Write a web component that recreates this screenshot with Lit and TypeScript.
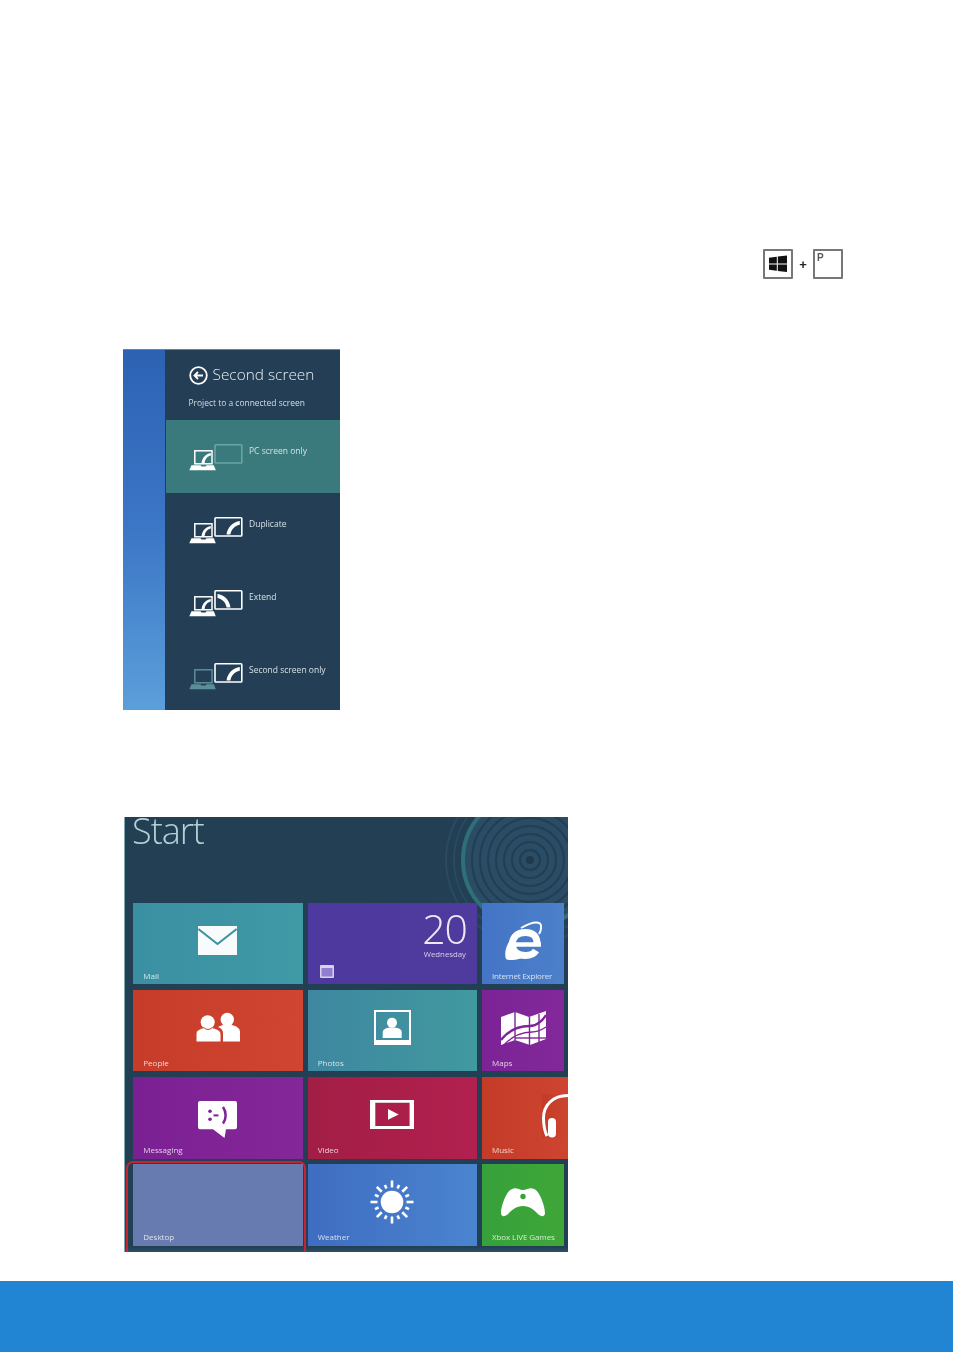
import { LitElement, html, css, svg } from "lit";
import { customElement } from "lit/decorators.js";

const laptop = (c: string, arc: boolean) => svg`
  <rect x="5.800" y="7.800" width="17.200" height="13" fill="none" stroke=${c} stroke-width="1.500"/>
  <path d="M2.500 22.200H11.500L12.500 23.400H16.500L17.500 22.200H24.800L26.800 27.200H0.300Z" fill=${c}/>
  ${arc ? svg`<path d="M12.500 20.500H15.500C16 16 18 13.500 21.800 12.500V10C16.500 11 13.200 14.500 12.500 20.500Z" fill=${c}/>` : null}`;

const monitor = (c: string) => svg`<rect x="26" y="1.800" width="26.800" height="18.200" rx="0.800" fill="none" stroke=${c} stroke-width="1.600"/>`;
const arcUp = svg`<path d="M37.500 18.600H41.400C42.200 13.500 45.500 10 50.800 8.800V5C44 6 38.500 11 37.500 18.600Z" fill="#fff"/>`;
const arcDown = svg`<path d="M28.500 5V9C33.500 10 36.800 13.500 37.600 18.600H41.500C40.500 11 35.500 6 28.500 5Z" fill="#fff"/>`;

const rows = [
  { label: "PC screen only", selected: true, laptopColor: "#fff", monitorColor: "#6aa5a3", art: null, laptopArc: true },
  { label: "Duplicate", selected: false, laptopColor: "#fff", monitorColor: "#fff", art: arcUp, laptopArc: true },
  { label: "Extend", selected: false, laptopColor: "#fff", monitorColor: "#fff", art: arcDown, laptopArc: true },
  { label: "Second screen only", selected: false, laptopColor: "#5b8f98", monitorColor: "#fff", art: arcUp, laptopArc: false },
];

const sunRays = Array.from({ length: 16 }, (_, i) => {
  const a = (i * Math.PI) / 8;
  const long = i % 2 === 0;
  const r1 = 14.500;
  const r2 = long ? 21.500 : 18.500;
  return svg`<line x1=${22 + r1 * Math.cos(a)} y1=${22 + r1 * Math.sin(a)} x2=${22 + r2 * Math.cos(a)} y2=${22 + r2 * Math.sin(a)} stroke="#fff" stroke-width="2.600"/>`;
});

const icons = {
  mail: html`<svg class="ico" width="39" height="29" viewBox="0 0 39 29"><rect width="39" height="29" fill="#f8fbfb"/><path d="M0.400 3L19.500 18L38.600 3" fill="none" stroke="#3b92a2" stroke-width="2"/></svg>`,
  people: html`<svg class="ico" width="44" height="31" viewBox="0 0 44 31"><circle cx="31.300" cy="7.500" r="6.700" fill="#fff"/><path d="M22 15C24 14 26 13.200 27 13H36C40 14 44 16 44 20V29.500H27V21C27 18 25 16 22 15Z" fill="#fff"/><circle cx="11.700" cy="10.200" r="7" fill="#fff"/><path d="M0 30V22C0 18 5 16.400 8 15.600C10 18 14 18 16 15.600C19 16.400 25 18 25 22V30Z" fill="#fff" stroke="#cb3f2c" stroke-width="1"/></svg>`,
  photos: html`<svg class="ico" width="37" height="35" viewBox="0 0 37 35"><rect x="1" y="1" width="35" height="33" fill="none" stroke="#fff" stroke-width="2"/><rect y="30" width="37" height="5" fill="#fff"/><circle cx="18" cy="12.700" r="5" fill="#fff"/><path d="M8.700 28V22C9 19 13 18 15 17.500H21C24 18 27.500 19 27.700 22V28Z" fill="#fff"/></svg>`,
  maps: html`<svg class="ico" width="45" height="34" viewBox="0 0 45 34"><path d="M0 6L14 1L28 6L45 0V28L29 34L14 29L0 34Z" fill="#fff"/><g fill="none" stroke="#7f2596"><path d="M0 29C10 16 22 15 29 15C36 15 42 9 45 4" stroke-width="2.400"/><path d="M3 34C12 24 22 21 31 21C37 21 42 18 45 16" stroke-width="1.400"/><path d="M14 1V29M28.500 6V34M38 3V31" stroke-width="1.400"/><path d="M14 27H45" stroke-width="1.400"/></g></svg>`,
  chat: html`<svg class="ico chat" width="39" height="37" viewBox="0 0 39 37"><path d="M2 0H37Q39 0 39 2V26Q39 28.300 37 28.300H28L26.500 37L15 28.300H2Q0 28.300 0 26V2Q0 0 2 0Z" fill="#fff"/><g fill="#7d2395"><circle cx="12" cy="10.300" r="1.800"/><circle cx="12" cy="18.300" r="1.800"/><rect x="15.500" y="13.400" width="5" height="2"/></g><path d="M25 6C28.500 11 28.500 18 25 22.500" fill="none" stroke="#7d2395" stroke-width="2.500"/></svg>`,
  video: html`<svg class="ico" width="44" height="29" viewBox="0 0 44 29"><path fill-rule="evenodd" d="M0 0H44V29H0ZM5.300 2.700V26H39.600V2.700Z" fill="#fff"/><path d="M18 9L28.700 14.500L18 19.800Z" fill="#fff"/></svg>`,
  music: html`<svg class="ico music" width="26" height="44" viewBox="0 0 26 44"><path d="M26 1.500C10 1.500 1.500 12 1.500 24C1.500 32 3 38 5 42" fill="none" stroke="#fff" stroke-width="3"/><rect x="6" y="24" width="8" height="19.500" rx="4" fill="#fff"/></svg>`,
  sun: html`<svg class="ico" width="44" height="44" viewBox="0 0 44 44"><circle cx="22" cy="22" r="11.300" fill="#fff"/>${sunRays}</svg>`,
  xbox: html`<svg class="ico" width="44" height="30" viewBox="0 0 44 30"><path d="M11 2C15 0 18 3 22 3C26 3 29 0 33 2C39 4 44 20 44 26C44 30 40 30 37 27C33 23 29 19 22 19C15 19 11 23 7 27C4 30 0 30 0 26C0 20 5 4 11 2Z" fill="#fff"/><circle cx="22" cy="9.500" r="2.700" fill="#3ba23a"/></svg>`,
  ie: html`<svg class="ico" width="38" height="39" viewBox="0 0 38 39"><g fill="none" stroke="#fff"><path d="M33 24C33.500 15 29 11.500 21.500 11.500C13.500 11.500 8.500 16 8.500 23C8.500 31 14 34.500 21.500 34.500C26 34.500 30 33 32 29.500" stroke-width="7"/><path d="M10 23.500H37" stroke-width="4.500"/><path d="M17 7C24 3 32 0 36 2.500C38 5 37 10 35 13" stroke-width="2"/></g><path d="M2 38C-1 30 5 16 17 8C10 15 6 24 7.500 30C9 35 14 37 19 36.500C13 39 5 40 2 38Z" fill="#fff"/></svg>`,
};

const tiles = [
  { label: "Mail", cls: "mail", icon: icons.mail },
  { label: "", cls: "calendar", icon: null },
  { label: "Internet Explorer", cls: "ieTile", icon: icons.ie },
  { label: "People", cls: "people", icon: icons.people },
  { label: "Photos", cls: "photos", icon: icons.photos },
  { label: "Maps", cls: "maps", icon: icons.maps },
  { label: "Messaging", cls: "messaging", icon: icons.chat },
  { label: "Video", cls: "video", icon: icons.video },
  { label: "Music", cls: "music", icon: icons.music },
  { label: "Desktop", cls: "desktop", icon: null },
  { label: "Weather", cls: "weather", icon: icons.sun },
  { label: "Xbox LIVE Games", cls: "xbox", icon: icons.xbox },
];

@customElement("app-root")
export class AppRoot extends LitElement {
  static styles = css`
    :host { display: block; width: 953px; height: 1352px; background: #fff; font-family: "Open Sans", "Liberation Sans", sans-serif; overflow: hidden; }
    .page { display: flex; flex-direction: column; height: 1352px; padding-top: 249px; box-sizing: border-box; }

    .keys { display: flex; justify-content: flex-end; padding-right: 110px; height: 30px; filter: blur(0.4px); }
    .key { width: 30px; height: 30px; box-sizing: border-box; border: 2px solid #76767b; border-radius: 1px; display: flex; align-items: center; justify-content: center; background: #fff; }
    .key.p { align-items: flex-start; justify-content: flex-start; padding: 1px 0 0 2px; font: bold 10px/12px "Liberation Sans", sans-serif; color: #55565a; }
    .plus { width: 20px; display: flex; align-items: center; justify-content: center; font: bold 13px "Liberation Sans", sans-serif; color: #222; }

    .panel { margin: 70px 0 0 123px; width: 217px; height: 361px; display: flex; filter: blur(0.35px); box-sizing: border-box; border-top: 1px solid #5f8b96; }
    .strip { width: 41.500px; background: linear-gradient(180deg, #2d62b3 0%, #3c76c6 50%, #5b9fda 100%); }
    .charm { flex: 1; background: #243f55; color: #fff; display: flex; flex-direction: column; overflow: hidden; }
    .charm-head { flex: none; height: 70px; box-sizing: border-box; padding: 14px 0 0 24px; }
    .title { display: flex; align-items: center; gap: 5px; font-size: 15.400px; font-weight: 300; line-height: 22px; color: #e6eff2; }
    .sub { margin-top: 10px; font-size: 8.450px; line-height: 13px; color: #d4dfe4; white-space: nowrap; }
    .row { flex: none; height: 73px; box-sizing: border-box; padding: 23px 0 0 24.500px; display: flex; gap: 6px; font-size: 8.500px; line-height: 12px; color: #d5e0e4; }
    .row.on { background: #3a7a7c; margin-left: 1px; padding-left: 23.500px; }
    .row svg { flex: none; }
    .row span { margin-top: 2px; white-space: nowrap; }

    .start { position: relative; margin: 107px 0 0 124px; width: 444px; height: 435px; overflow: hidden; }
    .art { height: 435px; box-sizing: border-box; position: relative; overflow: hidden; background: linear-gradient(#233f54 calc(100% - 5px), #2e5067); border-left: 1px solid #7fa9b3; filter: blur(0.35px); }
    .rings { position: absolute; left: 317px; top: -47px; }
    .start-title { height: 85.700px; box-sizing: border-box; padding-left: 7px; font-size: 36px; font-weight: 300; letter-spacing: -1px; line-height: 28px; color: #b4d2d6; position: relative; }
    .grid { position: relative; display: grid; grid-template-columns: 169.400px 169.300px 82.300px; grid-auto-rows: 81.600px; column-gap: 5px; row-gap: 5.600px; padding-left: 8.300px; }
    .tile { display: grid; overflow: hidden; color: rgba(255, 255, 255, 0.78); font-size: 8px; line-height: 11px; }
    .tile > * { grid-area: 1 / 1; }
    .tile .ico { place-self: center; margin-bottom: 6px; }
    .tile .ico.music { place-self: start end; margin: 17px 0 0 0; }
    .tile .ico.chat { margin-top: 8.800px; }
    .label { align-self: end; padding: 0 0 3.500px 10px; white-space: nowrap; }
    .ieTile .label { letter-spacing: -0.200px; }
    .xbox .label { letter-spacing: -0.100px; }
    .mail { background: linear-gradient(90deg, #3b8fa2, #3f9aa6); }
    .tile.calendar { background: linear-gradient(90deg, #4d399f, #4f3b9c); overflow: visible; }
    .ieTile { background: linear-gradient(90deg, #4474c6, #4c80ca); }
    .people { background: linear-gradient(90deg, #c63c29, #cf4531); }
    .photos { background: linear-gradient(90deg, #3e87a0, #41999f); }
    .maps { background: linear-gradient(90deg, #7b2395, #82289a); }
    .messaging { background: linear-gradient(90deg, #7b2093, #842798); }
    .video { background: linear-gradient(90deg, #a21e45, #b2204f); }
    .music { background: linear-gradient(90deg, #c43c28, #cd4530); margin-right: -4px; }
    .desktop { background: #687bb0; }
    .weather { background: linear-gradient(90deg, #3f6dc1, #4a84cf); }
    .xbox { background: linear-gradient(90deg, #36a03a, #3fa739); }
    .cal-day { justify-self: end; align-self: start; margin: 6.600px 10px 0 0; font-size: 41px; font-weight: 300; line-height: 38px; color: #efe8f6; letter-spacing: -1px; }
    .cal-week { justify-self: end; align-self: start; margin: 46px 11px 0 0; font-size: 7.800px; color: #d8d0ea; }
    .cal-ico { align-self: end; margin: 0 0 6px 12px; }
    .outline { position: absolute; left: 2px; top: 344px; width: 180px; height: 91px; box-sizing: border-box; border: 2px solid rgba(226, 34, 44, 0.85); border-bottom: none; border-radius: 7px 7px 0 0; }

    .footer { margin-top: 29px; height: 71px; background: #2185d3; }
  `;

  render() {
    return html`<div class="page">
      <div class="keys">
        <div class="key">
          <svg width="18" height="18" viewBox="0 0 18 18"><path d="M0 2.800L7.800 1.800V8.400H0ZM8.800 1.600L18 0.600V8.400H8.800ZM0 9.400H7.800V15.800L0 14.800ZM8.800 9.400H18V17L8.800 16Z" fill="#111"/></svg>
        </div>
        <div class="plus">+</div>
        <div class="key p">P</div>
      </div>

      <div class="panel">
        <div class="strip"></div>
        <div class="charm">
          <div class="charm-head">
            <div class="title">
              <svg width="19" height="19" viewBox="0 0 19 19"><circle cx="9.500" cy="9.500" r="8.300" fill="none" stroke="#fff" stroke-width="1.800"/><path d="M14 9.500H6M9 6L5.500 9.500L9 13" fill="none" stroke="#fff" stroke-width="1.800"/></svg>
              Second screen
            </div>
            <div class="sub">Project to a connected screen</div>
          </div>
          ${rows.map(
            (r) => html`<div class="row ${r.selected ? "on" : ""}">
              <svg width="54" height="28" viewBox="0 0 54 28">
                ${laptop(r.laptopColor, r.laptopArc)}${monitor(r.monitorColor)}${r.art}
              </svg>
              <span>${r.label}</span>
            </div>`
          )}
        </div>
      </div>

      <div class="start">
        <div class="art">
          <svg class="rings" width="180" height="180" viewBox="0 0 180 180" fill="none">
            <circle cx="88" cy="90" r="84" stroke="#2a4a62" stroke-width="2"/>
            <circle cx="88" cy="90" r="76" stroke="#2a4a62" stroke-width="2"/>
            <circle cx="88" cy="90" r="67" fill="#2a4c64" stroke="#2f6f78" stroke-width="4"/>
            <circle cx="88" cy="90" r="58" stroke="#213e54" stroke-width="2"/>
            <circle cx="88" cy="90" r="50" stroke="#213e54" stroke-width="2"/>
            <circle cx="88" cy="90" r="42" stroke="#213e54" stroke-width="2"/>
            <circle cx="88" cy="90" r="34" stroke="#213e54" stroke-width="2"/>
            <circle cx="88" cy="90" r="26" stroke="#213e54" stroke-width="2"/>
            <circle cx="88" cy="90" r="18" stroke="#213e54" stroke-width="2"/>
            <circle cx="88" cy="90" r="10" stroke="#213e54" stroke-width="2"/>
            <circle cx="88" cy="90" r="4" fill="#1f3a4d"/>
          </svg>
          <div class="start-title">Start</div>
          <div class="grid">
            ${tiles.map(
              (t) => html`<div class="tile ${t.cls}">
                ${t.cls === "calendar"
                  ? html`<div class="cal-day">20</div>
                      <div class="cal-week">Wednesday</div>
                      <svg class="cal-ico" width="14" height="13" viewBox="0 0 14 13"><rect width="14" height="13" rx="1" fill="#d9d2ec"/><rect x="1.500" y="3" width="11" height="8.500" fill="#8f7fd0"/></svg>`
                  : t.icon}
                ${t.label ? html`<div class="label">${t.label}</div>` : null}
              </div>`
            )}
          </div>
        </div>
        <div class="outline"></div>
      </div>

      <div class="footer"></div>
    </div>`;
  }
}
